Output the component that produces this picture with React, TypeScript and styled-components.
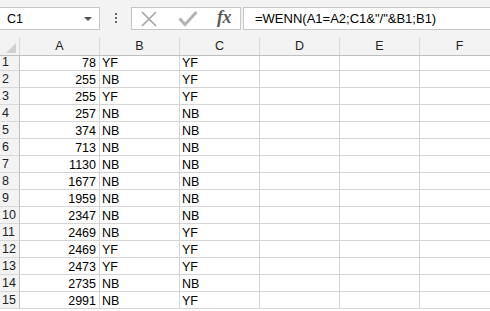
import React from 'react';
import styled, { createGlobalStyle } from 'styled-components';

const GlobalStyle = createGlobalStyle`
  html, body {
    margin: 0;
    padding: 0;
    background: #ffffff;
    overflow: hidden;
  }
  * {
    box-sizing: border-box;
  }
`;

const Sheet = styled.div`
  width: 490px;
  height: 311px;
  overflow: hidden;
  font-family: "Liberation Sans", Arial, sans-serif;
  color: #000;
  background: #fff;
`;

const FormulaBar = styled.div`
  display: flex;
  align-items: flex-start;
  height: 37px;
  padding-top: 7px;
  background: #f3f3f3;
`;

const NameBox = styled.div`
  display: flex;
  align-items: center;
  justify-content: space-between;
  width: 101px;
  height: 23px;
  margin-left: -1px;
  padding: 0 7px 0 7px;
  background: #fff;
  border: 1px solid #c6c6c6;
  font-size: 12.5px;
`;

const DropArrow = styled.span`
  width: 0;
  height: 0;
  border-left: 4px solid transparent;
  border-right: 4px solid transparent;
  border-top: 4px solid #555;
`;

const Grip = styled.div`
  display: flex;
  flex-direction: column;
  align-items: center;
  gap: 2px;
  width: 31px;
  padding-top: 6px;
  span {
    width: 2px;
    height: 2px;
    background: #666;
  }
`;

const ButtonBox = styled.div`
  display: flex;
  align-items: center;
  justify-content: space-between;
  width: 110px;
  height: 23px;
  padding: 0 9px 0 8px;
  background: #fff;
  border: 1px solid #c6c6c6;
`;

const FxText = styled.span`
  font-family: "Liberation Serif", "Times New Roman", serif;
  font-style: italic;
  font-weight: bold;
  font-size: 18px;
  color: #595959;
  letter-spacing: -0.5px;
  margin-top: -3px;
`;

const FormulaInput = styled.div`
  flex: 1;
  display: flex;
  align-items: center;
  height: 23px;
  margin-left: 2px;
  padding-left: 11px;
  background: #fff;
  border: 1px solid #c6c6c6;
  border-right: none;
  font-size: 13px;
  white-space: nowrap;
`;

const Grid = styled.div`
  display: grid;
  grid-template-columns: 20px repeat(6, 80px);
  grid-auto-rows: 17px;
`;

const HeadCell = styled.div`
  position: relative;
  display: flex;
  align-items: center;
  justify-content: center;
  height: 19px;
  background: #f3f3f3;
  border-right: 1px solid #d9d9d9;
  border-bottom: 1px solid #bfbfbf;
  font-size: 12.5px;
  color: #222;
`;

const CornerMark = styled.span`
  position: absolute;
  right: 3px;
  bottom: 2px;
  width: 0;
  height: 0;
  border-left: 10px solid transparent;
  border-bottom: 10px solid #d0d0d0;
`;

const RowHead = styled.div`
  display: flex;
  align-items: center;
  padding-left: 2px;
  background: #f3f3f3;
  border-right: 1px solid #bfbfbf;
  border-bottom: 1px solid #d9d9d9;
  font-size: 12.5px;
  color: #222;
`;

const Cell = styled.div<{ $num?: boolean }>`
  display: flex;
  align-items: center;
  justify-content: ${(p) => (p.$num ? 'flex-end' : 'flex-start')};
  padding: 1px 3px 0 2px;
  border-right: 1px solid #d4d4d4;
  border-bottom: 1px solid #d4d4d4;
  font-size: 12.5px;
  white-space: nowrap;
  overflow: hidden;
`;

const rows: [number, string, string][] = [
  [78, 'YF', 'YF'],
  [255, 'NB', 'YF'],
  [255, 'YF', 'YF'],
  [257, 'NB', 'NB'],
  [374, 'NB', 'NB'],
  [713, 'NB', 'NB'],
  [1130, 'NB', 'NB'],
  [1677, 'NB', 'NB'],
  [1959, 'NB', 'NB'],
  [2347, 'NB', 'NB'],
  [2469, 'NB', 'YF'],
  [2469, 'YF', 'YF'],
  [2473, 'YF', 'YF'],
  [2735, 'NB', 'NB'],
  [2991, 'NB', 'YF'],
];

const columns = ['A', 'B', 'C', 'D', 'E', 'F'];

export default function App() {
  return (
    <Sheet>
      <GlobalStyle />
      <FormulaBar>
        <NameBox>
          C1
          <DropArrow />
        </NameBox>
        <Grip>
          <span />
          <span />
          <span />
        </Grip>
        <ButtonBox>
          <svg width="18" height="16" viewBox="0 0 18 16">
            <path d="M2 1 L16 15 M16 1 L2 15" stroke="#a6a6a6" strokeWidth="1.7" fill="none" />
          </svg>
          <svg width="20" height="17" viewBox="0 0 20 17">
            <path d="M1.5 8.5 L7 14.5 L18.5 2" stroke="#b3b3b3" strokeWidth="3" fill="none" />
          </svg>
          <FxText>fx</FxText>
        </ButtonBox>
        <FormulaInput>=WENN(A1=A2;C1&amp;"/"&amp;B1;B1)</FormulaInput>
      </FormulaBar>
      <Grid>
        <HeadCell>
          <CornerMark />
        </HeadCell>
        {columns.map((c) => (
          <HeadCell key={c}>{c}</HeadCell>
        ))}
        {rows.map(([a, b, c], i) => (
          <React.Fragment key={i}>
            <RowHead>{i + 1}</RowHead>
            <Cell $num>{a}</Cell>
            <Cell>{b}</Cell>
            <Cell>{c}</Cell>
            <Cell />
            <Cell />
            <Cell />
          </React.Fragment>
        ))}
      </Grid>
    </Sheet>
  );
}
